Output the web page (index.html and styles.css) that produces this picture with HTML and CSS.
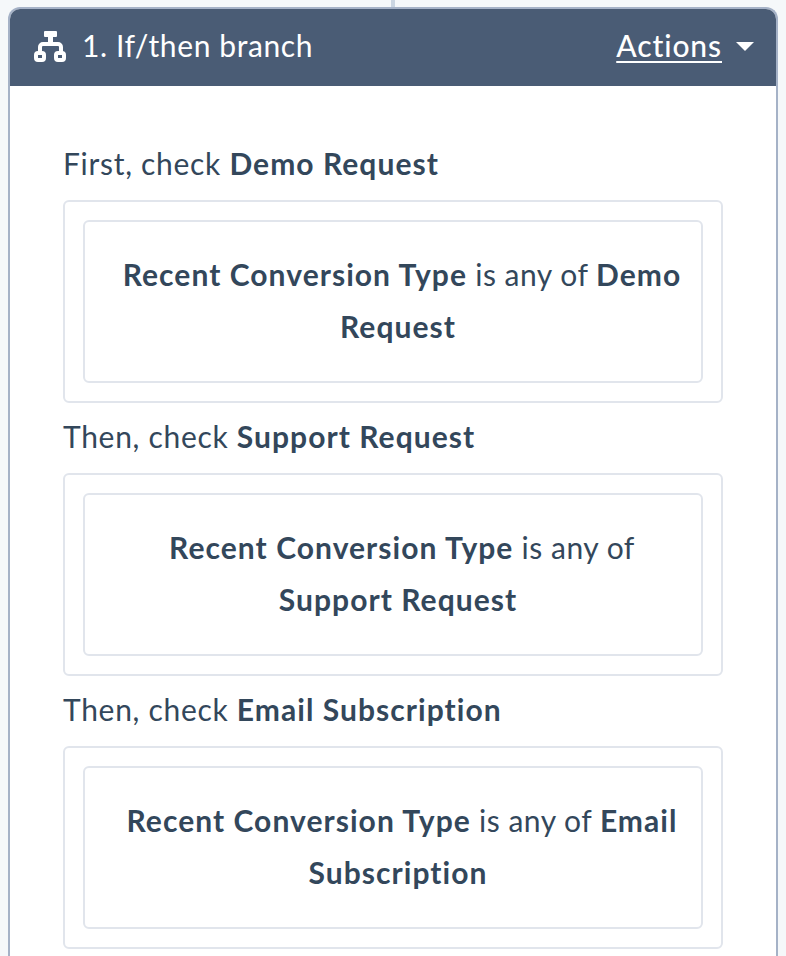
FILE: index.html
```html
<!DOCTYPE html>
<html lang="en">
<head>
  <meta charset="UTF-8" />
  <title>If/then branch</title>
  <link rel="stylesheet" href="styles.css">
</head>
<body>
  <div class="connector"></div>
  <div class="action-card">
    <div class="card-header">
      <svg class="branch-icon" viewBox="0 0 32 32" width="32" height="32">
        <rect x="10" y="0" width="13" height="6" rx="1" fill="#fff"/>
        <rect x="14" y="5" width="5" height="6" fill="#fff"/>
        <path d="M6 21v-5a3 3 0 0 1 3-3h15a3 3 0 0 1 3 3v5" fill="none" stroke="#fff" stroke-width="4"/>
        <rect x="2" y="22" width="8" height="7" rx="2" fill="none" stroke="#fff" stroke-width="4"/>
        <rect x="22" y="22" width="8" height="7" rx="2" fill="none" stroke="#fff" stroke-width="4"/>
      </svg>
      <span class="card-title">1. If/then branch</span>
      <a class="actions-link">Actions</a>
      <span class="caret"></span>
    </div>
    <div class="card-body">
      <div class="branch-label">First, check <b>Demo Request</b></div>
      <div class="branch-box">
        <div class="filter-box"><span class="lead"></span><b>Recent Conversion Type</b> is any of <b>Demo Request</b></div>
      </div>
      <div class="branch-label">Then, check <b>Support Request</b></div>
      <div class="branch-box">
        <div class="filter-box"><span class="lead"></span><b>Recent Conversion Type</b> is any of <b>Support Request</b></div>
      </div>
      <div class="branch-label">Then, check <b>Email Subscription</b></div>
      <div class="branch-box">
        <div class="filter-box"><span class="lead"></span><b>Recent Conversion Type</b> is any of <b>Email Subscription</b></div>
      </div>
    </div>
  </div>
</body>
</html>
```

FILE: styles.css
```css
html, body {
  height: 956px;
  overflow: hidden;
}
body {
  margin: 0;
  padding: 0 8px;
  background: #f5f8fa;
  font-family: 'Lato', sans-serif;
  color: #33475b;
}
b {
  letter-spacing: 1.05px;
}
.connector {
  width: 4px;
  height: 7px;
  margin: 0 auto;
  background: #cbd6e2;
}
.action-card {
  border: 2px solid #a5b2c7;
  border-bottom: none;
  border-radius: 12px 12px 0 0;
  background: #fff;
  overflow: hidden;
}
.card-header {
  display: flex;
  align-items: center;
  height: 77px;
  padding: 0 22px 0 24px;
  background: #4a5c75;
  color: #fff;
}
.branch-icon {
  flex: none;
  margin: -2px 16px 0 0;
}
.card-title {
  flex: 1;
  font-size: 30px;
  letter-spacing: 0.6px;
  margin-top: -5px;
}
.actions-link {
  font-size: 30px;
  font-weight: 500;
  letter-spacing: 0.9px;
  margin-top: -5px;
  text-decoration: underline;
  text-decoration-thickness: 2px;
  text-underline-offset: 4px;
}
.caret {
  width: 0;
  height: 0;
  margin: -3px 0 0 14px;
  border-left: 9px solid transparent;
  border-right: 9px solid transparent;
  border-top: 9px solid #fff;
}
.card-body {
  padding: 44px 53px 8px;
}
.branch-label {
  height: 70px;
  font-size: 30px;
  letter-spacing: 0.7px;
  line-height: 67px;
}
.branch-box {
  padding: 18px;
  border: 2px solid #e1e5ec;
  border-radius: 6px;
}
.filter-box {
  padding: 25.500px 15px 29.500px 25px;
  border: 2px solid #e1e5ec;
  border-radius: 6px;
  font-size: 30px;
  letter-spacing: 0.5px;
  line-height: 52px;
  text-align: center;
}
.lead {
  margin-left: 8px;
}
```
